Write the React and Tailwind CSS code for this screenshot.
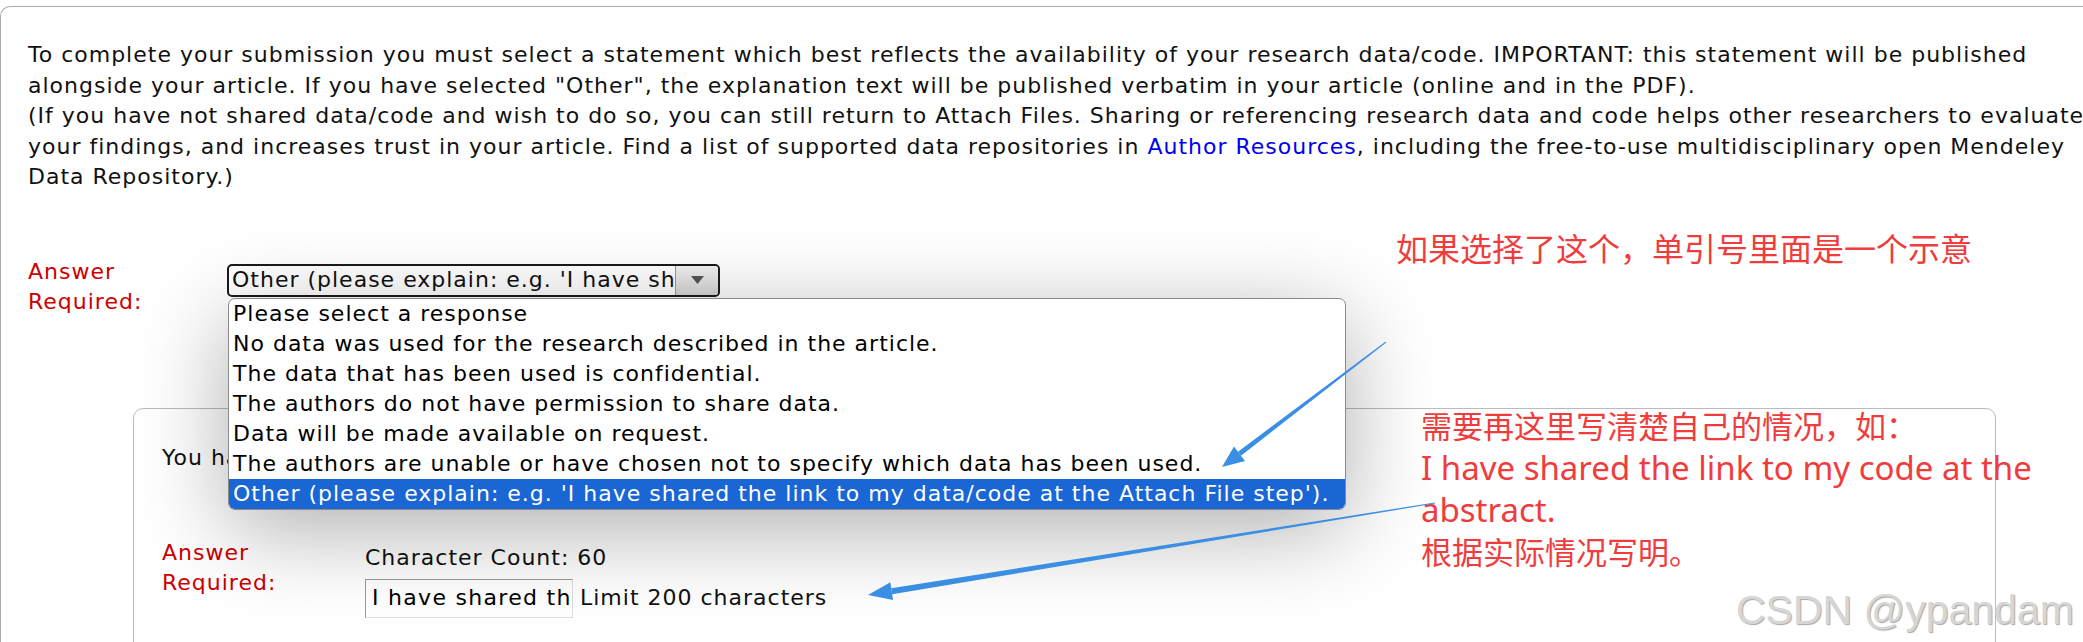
export default function App() {
  const options = [
    "Please select a response",
    "No data was used for the research described in the article.",
    "The data that has been used is confidential.",
    "The authors do not have permission to share data.",
    "Data will be made available on request.",
    "The authors are unable or have chosen not to specify which data has been used.",
  ];
  return (
    <div className="relative w-[2083px] h-[642px] overflow-hidden bg-white text-[22px] leading-[30px] tracking-[1px] text-[#111] font-['DejaVu_Sans','Verdana',sans-serif]">
      <div className="mt-[6px] w-[2200px] h-[700px] border-t border-l border-[#aaa] rounded-tl-[10px] pl-[27px] pt-[33px]">
        <p className="whitespace-nowrap leading-[30.5px]">
          To complete your submission you must select a statement which best reflects the availability of your research data/code. IMPORTANT: this statement will be published
          <br />
          alongside your article. If you have selected "Other", the explanation text will be published verbatim in your article (online and in the PDF).
          <br />
          (If you have not shared data/code and wish to do so, you can still return to Attach Files. Sharing or referencing research data and code helps other researchers to evaluate
          <br />
          your findings, and increases trust in your article. Find a list of supported data repositories in{" "}
          <span className="text-[#0000ee]">Author Resources</span>, including the free-to-use multidisciplinary open Mendeley
          <br />
          Data Repository.)
        </p>

        <div className="mt-[64px] flex">
          <div className="w-[199px] text-[#cc0000]">
            Answer
            <br />
            Required:
          </div>
          <div className="relative mt-[7px]">
            <div className="flex h-[33px] w-[493px] items-stretch overflow-hidden rounded-[5px] border-2 border-[#1a1a1a] bg-white">
              <div className="flex flex-1 items-center overflow-hidden whitespace-nowrap pl-[3px]">
                Other (please explain: e.g. 'I have shared the link to my data/code at the Attach File step').
              </div>
              <div className="flex w-[43px] items-center justify-center border-l border-[#999] bg-gradient-to-b from-[#f2f2f2] to-[#d6d6d6]">
                <svg width="13" height="8" viewBox="0 0 13 8">
                  <path d="M0 0 L13 0 L6.5 8 Z" fill="#555" />
                </svg>
              </div>
            </div>
            <div className="absolute left-[1px] top-[34px] z-10 w-[1118px] overflow-hidden rounded-[7px] border border-[#8a8a8a] bg-white shadow-[0_20px_90px_rgba(0,0,0,0.32)]">
              {options.map((o) => (
                <div key={o} className="h-[30px] whitespace-nowrap pl-[4px] leading-[30px] text-black">
                  {o}
                </div>
              ))}
              <div className="h-[30px] whitespace-nowrap bg-[#1a66d4] pl-[4px] leading-[30px] text-white">
                Other (please explain: e.g. 'I have shared the link to my data/code at the Attach File step').
              </div>
            </div>
          </div>
        </div>

        <div className="mt-[91px] ml-[105px] h-[300px] w-[1863px] rounded-[10px] border border-[#bbb] bg-white pl-[28px] pt-[34px]">
          <p className="whitespace-nowrap">You have selected "Other". Please explain below.</p>
          <div className="mt-[65px] flex">
            <div className="w-[203px] text-[#cc0000]">
              Answer
              <br />
              Required:
            </div>
            <div className="pt-[5px]">
              <div className="whitespace-nowrap">Character Count: 60</div>
              <div className="mt-[6px] flex items-center">
                <div className="flex h-[39px] w-[208px] items-center overflow-hidden whitespace-nowrap border border-t-[#999] border-l-[#999] border-r-[#ddd] border-b-[#ddd] bg-white pl-[6px] tracking-[1.3px] text-black">
                  I have shared the link to my code at the abstract.
                </div>
                <div className="ml-[7px] whitespace-nowrap">Limit 200 characters</div>
              </div>
            </div>
          </div>
        </div>
      </div>

      {/* annotations */}
      <div className="absolute left-[1396px] top-[226px] whitespace-nowrap text-[32px] leading-[42px] tracking-normal text-[#f03c3c] font-['Noto_Sans_CJK_SC',sans-serif]">
        如果选择了这个，单引号里面是一个示意
      </div>
      <div className="absolute left-[1421px] top-[405px] z-20 whitespace-nowrap text-[31px] leading-[42px] tracking-normal text-[#f03c3c] font-['Noto_Sans','Noto_Sans_CJK_SC',sans-serif]">
        <div>需要再这里写清楚自己的情况，如：</div>
        <div className="text-[33px]">I have shared the link to my code at the</div>
        <div className="text-[33px]">abstract.</div>
        <div>根据实际情况写明。</div>
      </div>
      <div className="absolute left-[1736px] top-[590px] whitespace-nowrap text-[41px] leading-[41px] tracking-normal text-[#d6d6d6] [text-shadow:1px_1px_1px_rgba(0,0,0,0.35)] font-['Liberation_Sans',Arial,sans-serif]">
        CSDN @ypandam
      </div>

      <svg className="pointer-events-none absolute left-0 top-0 z-30" width="2083" height="642">
        <polygon points="1386.3,342.4 1241,455.7 1238,451.7 1385.7,341.6" fill="#3a8fe3" />
        <polygon points="1222,467 1245,460.9 1234,446.5" fill="#3a8fe3" />
        <polygon points="1435.1,503.5 892.2,594.2 891.2,588.2 1434.9,502.5" fill="#3a8fe3" />
        <polygon points="868,595 893.1,600.1 890.3,582.3" fill="#3a8fe3" />
      </svg>
    </div>
  );
}
